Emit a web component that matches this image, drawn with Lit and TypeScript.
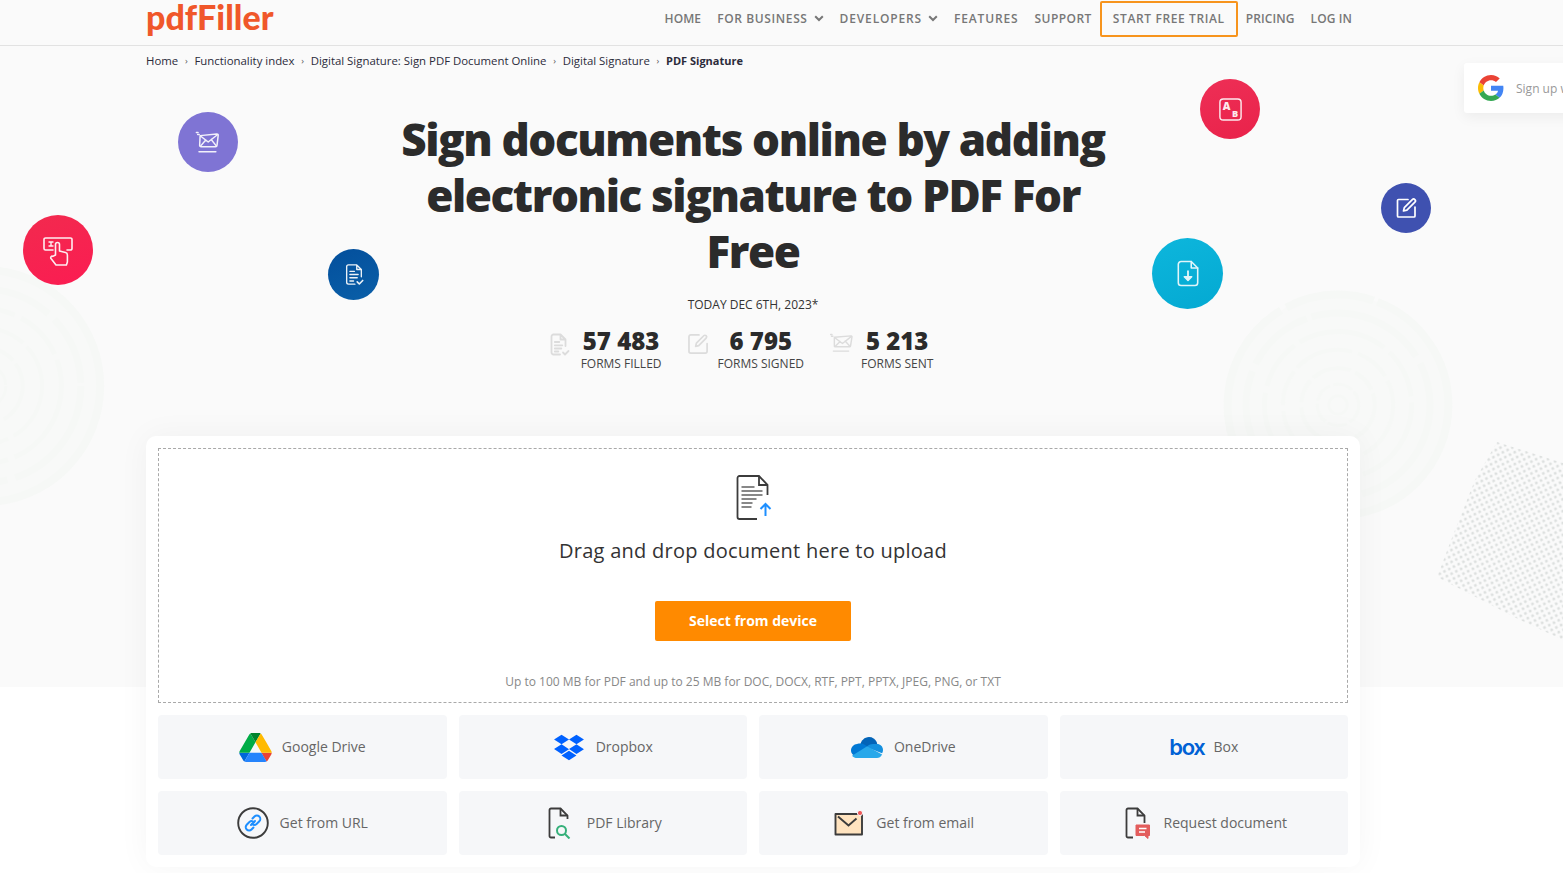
import { LitElement, html, css, svg } from "lit";
import { customElement } from "lit/decorators.js";

const chevron = html`<svg class="chev" viewBox="0 0 10 7" width="10" height="7"><path d="M1.200 1.200 5 5l3.800-3.800" fill="none" stroke="#777" stroke-width="2"/></svg>`;

const rings = (cx: number, cy: number, r: number) => svg`
  <g fill="none" stroke="#f6f8f6">
    <circle cx=${cx} cy=${cy} r=${r * 0.96} fill="#f8f9f8" stroke-width="8" stroke-dasharray="180 6 90 4"/>
    <circle cx=${cx} cy=${cy} r=${r * 0.8} stroke-width="7" stroke-dasharray="120 8 70 5"/>
    <circle cx=${cx} cy=${cy} r=${r * 0.64} stroke-width="5" stroke-dasharray="90 7 50 6"/>
    <circle cx=${cx} cy=${cy} r=${r * 0.48} stroke-width="4" stroke-dasharray="60 6 36 5"/>
    <circle cx=${cx} cy=${cy} r=${r * 0.32} stroke-width="4" stroke-dasharray="40 5 24 4"/>
    <circle cx=${cx} cy=${cy} r=${r * 0.18} stroke-width="3" stroke-dasharray="20 3"/>
    <circle cx=${cx} cy=${cy} r=${r * 0.08} stroke-width="3"/>
  </g>`;

const icons = {
  mail: html`<svg viewBox="0 0 32 32" width="30" height="30" fill="none" stroke="#fff" stroke-width="1.600" stroke-linejoin="round" stroke-linecap="round" opacity=".9"><path d="M7.600 9.200 25.400 7.400c.9 0 1.500.6 1.500 1.400l-1.300 10.800c-.1.800-.7 1.400-1.500 1.400H8.600c-1 0-1.600-.8-1.500-1.600z"/><path d="M8 9.600 16.200 16 26.400 8M8 20.400l5.600-6.600M25 20.400 19.400 13.400"/><path d="M5 8h1.600M3.600 5.800h1.800M6.400 26.300h18"/></svg>`,
  hand: html`<svg viewBox="0 0 34 34" width="34" height="34" fill="none" stroke="#fff" stroke-width="1.600" stroke-linejoin="round" stroke-linecap="round" opacity=".92"><path d="M12 17H4.500A1.500 1.500 0 0 1 3 15.500V6.500A1.500 1.500 0 0 1 4.500 5h25A1.500 1.500 0 0 1 31 6.500v9a1.500 1.500 0 0 1-1.500 1.500H26"/><path d="M8 9h4M8 13h4M10 9v4" stroke-width="1.400"/><path d="M14.500 22V11.500a2 2 0 0 1 4 0V18l6 1.500c1.200.3 1.900 1.200 1.900 2.400V29l-1 3H15l-5-6.500c-.8-1.100.4-2.900 1.800-2.100z"/></svg>`,
  doc: html`<svg viewBox="0 0 24 26" width="22" height="24" fill="none" stroke="#fff" stroke-width="1.500" stroke-linejoin="round" stroke-linecap="round" opacity=".92"><path d="M13 23H6a2 2 0 0 1-2-2V4a2 2 0 0 1 2-2h9l5 5v8M15 2v5h5"/><path d="M7.500 9h5M7.500 12.500h9M7.500 16h8M7.500 19.500h4"/><path d="m15.500 20.500 2.300 2.300 3.700-3.800" stroke-width="1.800"/></svg>`,
  ab: html`<svg viewBox="0 0 26 26" width="25" height="25" fill="none" stroke="#fff" stroke-width="1.500" opacity=".9"><rect x="2" y="2" width="22" height="22" rx="3.500"/><text x="5" y="13" font-family="Open Sans, sans-serif" font-size="11" font-weight="800" fill="#fff" stroke="none">A</text><text x="14.500" y="21" font-family="Open Sans, sans-serif" font-size="9.500" font-weight="800" fill="#fff" stroke="none">B</text></svg>`,
  edit: html`<svg viewBox="0 0 24 24" width="24" height="24" fill="none" stroke="#fff" stroke-width="1.700" stroke-linejoin="round" stroke-linecap="round"><path d="M14 3.500H4.500a1 1 0 0 0-1 1V20a1 1 0 0 0 1 1H20a1 1 0 0 0 1-1v-9"/><path d="m9.500 15 .8-3.400 8-8a1.700 1.700 0 0 1 2.600 2.600l-8 8z"/></svg>`,
  down: html`<svg viewBox="0 0 26 32" width="24" height="30" fill="none" stroke="#fff" stroke-width="1.700" stroke-linejoin="round" stroke-linecap="round" opacity=".88"><path d="M16.500 2.500H5.500a3 3 0 0 0-3 3v20a3 3 0 0 0 3 3h15a3 3 0 0 0 3-3v-16z"/><path d="M16.500 2.500v7h7"/><path d="M13 13v9" stroke-width="2"/><path d="m9 19 4 4 4-4z" fill="#fff"/></svg>`,
  statDoc: html`<svg viewBox="0 0 20 24" width="20" height="24" fill="none" stroke="#dcdcdc" stroke-width="1.800" stroke-linejoin="round" stroke-linecap="round"><path d="M10 21.500H3.500a2 2 0 0 1-2-2v-16a2 2 0 0 1 2-2h7l5 5V13M10.500 1.500v5h5"/><path d="M4.800 9h4.500M4.800 12.300h7.500M4.800 15.500h6.500M4.800 18.500h3.500"/><path d="m13 19.500 2 2 3.500-3.500"/></svg>`,
  statEdit: html`<svg viewBox="0 0 22 22" width="21" height="21" fill="none" stroke="#dcdcdc" stroke-width="1.800" stroke-linejoin="round" stroke-linecap="round"><path d="M11.500 2H3a2 2 0 0 0-2 2v15a2 2 0 0 0 2 2h15a2 2 0 0 0 2-2v-8"/><path d="m8 14 .8-3.300 7.700-7.800a1.600 1.600 0 0 1 2.500 2.400l-7.800 7.900z"/></svg>`,
  statMail: html`<svg viewBox="0 0 24 21" width="23" height="20" fill="none" stroke="#dcdcdc" stroke-width="1.500" stroke-linejoin="round" stroke-linecap="round"><path d="M4.500 4.500 22 3c.6 0 1 .5 1 1l-1.500 9.500c-.1.600-.5 1-1.200 1H5.500c-.7 0-1.100-.5-1-1.100z"/><path d="m5 5 8 6 9.500-7.500M5.500 14l5-5M20.800 14l-5-5.500"/><path d="M1.500 3.500H3M.5 1.500H2M3.500 19h16"/></svg>`,
  upload: html`<svg class="up" viewBox="0 0 38 46" width="38" height="46" fill="none"><path d="M31.500 20V9.800L23 1H3.500A2 2 0 0 0 1.500 3v39a2 2 0 0 0 2 2H21" stroke="#3c3c3c" stroke-width="1.800"/><path d="M23 1v9h8.500" stroke="#3c3c3c" stroke-width="1.800"/><path d="M5.500 12h13M5.500 16h21M5.500 20h21M5.500 24h15M5.500 28h11M5.500 32h10" stroke="#888" stroke-width="1.800"/><path d="M29.500 41V29M24.500 34l5-5 5 5" stroke="#1e8fff" stroke-width="2"/></svg>`,
  gdrive: html`<svg viewBox="0 0 87.300 78" width="33" height="29"><path d="m6.600 66.850 3.850 6.650c.8 1.400 1.950 2.500 3.300 3.300l13.750-23.800h-27.500c0 1.550.4 3.100 1.200 4.500z" fill="#0066da"/><path d="m43.650 25-13.750-23.800c-1.350.8-2.500 1.900-3.300 3.300l-25.400 44a9.060 9.060 0 0 0 -1.200 4.500h27.500z" fill="#00ac47"/><path d="m73.550 76.800c1.350-.8 2.500-1.900 3.300-3.300l1.600-2.750 7.650-13.250c.8-1.400 1.200-2.950 1.200-4.500h-27.502l5.852 11.500z" fill="#ea4335"/><path d="m43.650 25 13.750-23.800c-1.350-.8-2.900-1.200-4.500-1.200h-18.500c-1.600 0-3.150.45-4.500 1.200z" fill="#00832d"/><path d="m59.800 53h-32.300l-13.750 23.800c1.350.8 2.900 1.200 4.500 1.200h50.800c1.600 0 3.150-.45 4.500-1.200z" fill="#2684fc"/><path d="m73.400 26.500-12.700-22c-.8-1.400-1.950-2.500-3.300-3.300l-13.750 23.800 16.150 28h27.450c0-1.550-.4-3.100-1.200-4.500z" fill="#ffba00"/></svg>`,
  dropbox: html`<svg viewBox="0 0 528 512" width="30" height="29"><path fill="#0061ff" d="M264.400 116.300l-132 84.300 132 84.300-132 84.300L0 284.100l132.300-84.300L0 116.300 132.300 32l132.100 84.300zM131.600 395.700l132-84.300 132 84.300-132 84.300-132-84.300zm132.800-111.600l132-84.300-132-83.600L395.700 32 528 116.300l-132.300 84.300L528 284.800l-132.300 84.300-131.300-85z"/></svg>`,
  onedrive: html`<svg viewBox="0 0 32 21" width="32" height="21"><path fill="#0364b8" d="M9 8.500C10 3.500 13.500 0 18 0c3.500 0 6.300 2 7.700 5 .3.700.4 1.400.5 2.300L20 12z"/><path fill="#0078d4" d="M9.500 6.500c1.500 0 3 .4 4.200 1.200L20 12l-7 7H6C2.500 19 0 16.500 0 13.500 0 10 3 7 6 7c1.200-.4 2.300-.5 3.500-.5z"/><path fill="#1490df" d="M26 7c3.300 0 6 2.600 6 6 0 1.200-.3 2.200-.9 3.200L20 12l-3.800-2.800C18 7.800 20 7 22 7z"/><path fill="#28a8ea" d="M16.200 9.200 31.100 17.500C30 20 28 21 26 21H6c-1.800 0-3.700-.6-5-2.300z"/></svg>`,
  url: html`<svg viewBox="0 0 32 32" width="32" height="32" fill="none"><circle cx="16" cy="16" r="14.800" stroke="#3c3c3c" stroke-width="1.900"/><g stroke="#1e8fff" stroke-width="2" stroke-linecap="round"><path d="m14 18 4-4"/><path d="m15.500 11.500 2-2a3.300 3.300 0 0 1 4.800 4.800l-2.700 2.700a3.300 3.300 0 0 1-4.500-.2"/><path d="m16.500 20.500-2 2a3.300 3.300 0 0 1-4.800-4.800l2.700-2.700a3.300 3.300 0 0 1 4.500.2"/></g></svg>`,
  lib: html`<svg viewBox="0 0 24 32" width="24" height="32" fill="none"><path d="M7 30.500H3A1.500 1.500 0 0 1 1.500 29V3A1.500 1.500 0 0 1 3 1.500h9.500l7 7V12" stroke="#3c3c3c" stroke-width="1.800"/><path d="M12.500 1.500v7h7" stroke="#3c3c3c" stroke-width="1.800"/><circle cx="13.500" cy="23.500" r="4.500" stroke="#35b07a" stroke-width="2"/><path d="m17 27 4.500 4.500" stroke="#35b07a" stroke-width="2"/></svg>`,
  email: html`<svg viewBox="0 0 30 26" width="30" height="26" fill="none"><path d="M1.500 4h20v0h6.500v20.500H1.500z" fill="#ffe3bf" stroke="#3c3c3c" stroke-width="1.900" stroke-linejoin="round"/><path d="m4 6.500 10.500 9 8-7" stroke="#3c3c3c" stroke-width="1.900"/><circle cx="26" cy="3" r="2.600" fill="#ee5a5a" stroke="#f6f7f9"/></svg>`,
  req: html`<svg viewBox="0 0 26 32" width="26" height="32" fill="none"><path d="M8 30.500H3A1.500 1.500 0 0 1 1.500 29V3A1.500 1.500 0 0 1 3 1.500h9.500l7 7V16" stroke="#3c3c3c" stroke-width="1.800"/><path d="M12.500 1.500v7h7" stroke="#3c3c3c" stroke-width="1.800"/><path d="M11 18h13.500v10.500h-1.500v3l-3.500-3H11z" fill="#e35d5d" stroke="#e35d5d" stroke-linejoin="round"/><path d="M14 21.500h7.500M14 25h6" stroke="#fff" stroke-width="1.500"/></svg>`,
  g: html`<svg viewBox="0 0 48 48" width="26" height="26"><path fill="#EA4335" d="M24 9.500c3.540 0 6.710 1.220 9.210 3.600l6.850-6.850C35.900 2.380 30.470 0 24 0 14.620 0 6.510 5.380 2.560 13.220l7.980 6.190C12.430 13.720 17.740 9.500 24 9.500z"/><path fill="#4285F4" d="M46.980 24.550c0-1.570-.15-3.090-.38-4.550H24v9.020h12.940c-.58 2.960-2.260 5.480-4.780 7.180l7.730 6c4.510-4.180 7.090-10.360 7.090-17.650z"/><path fill="#FBBC05" d="M10.530 28.590c-.48-1.450-.76-2.990-.76-4.590s.27-3.140.76-4.590l-7.980-6.190C.92 16.460 0 20.120 0 24c0 3.880.92 7.540 2.560 10.780l7.970-6.190z"/><path fill="#34A853" d="M24 48c6.480 0 11.930-2.130 15.890-5.810l-7.730-6c-2.150 1.450-4.920 2.300-8.160 2.300-6.260 0-11.570-4.220-13.470-9.910l-7.980 6.190C6.510 42.620 14.620 48 24 48z"/></svg>`,
};

const tiles = [
  [icons.gdrive, "Google Drive", 10, 0],
  [icons.dropbox, "Dropbox", 12, 1],
  [icons.onedrive, "OneDrive", 11, 0],
  [html`<span class="boxlogo">box</span>`, "Box", 9, 0],
  [icons.url, "Get from URL", 11, 0],
  [icons.lib, "PDF Library", 15, 4],
  [icons.email, "Get from email", 12, 2],
  [icons.req, "Request document", 13, 4],
] as const;

const floats = [
  { cls: "c-purple", x: 178, y: 112, s: 60, icon: icons.mail },
  { cls: "c-red", x: 23, y: 215, s: 70, icon: icons.hand },
  { cls: "c-navy", x: 328, y: 249, s: 51, icon: icons.doc },
  { cls: "c-red2", x: 1200, y: 79, s: 60, icon: icons.ab },
  { cls: "c-indigo", x: 1381, y: 183, s: 50, icon: icons.edit },
  { cls: "c-cyan", x: 1152, y: 238, s: 71, icon: icons.down },
];

@customElement("app-root")
export class AppRoot extends LitElement {
  static styles = css`
    :host {
      display: block;
      position: relative;
      height: 873px;
      overflow: hidden;
      background: linear-gradient(#fafafa 687px, #fff 687px);
      font-family: "Open Sans", sans-serif;
      color: #333;
    }
    .deco { position: absolute; inset: 0; pointer-events: none; }
    .deco-svg { position: absolute; left: 0; top: 0; }
    .float {
      position: absolute; border-radius: 50%;
      display: flex; align-items: center; justify-content: center;
    }
    .c-purple { background: #7f74d4; }
    .c-red { background: linear-gradient(160deg, #f22a4e, #fb1c52); }
    .c-navy { background: linear-gradient(160deg, #034f9c, #0a5fa8); }
    .c-red2 { background: linear-gradient(160deg, #ee2f56, #e9224a); }
    .c-indigo { background: #3f51b0; }
    .c-cyan { background: linear-gradient(160deg, #0db6dc, #04a9d2); }
    .content { position: relative; }
    header {
      height: 45px; box-sizing: content-box;
      border-bottom: 1px solid #e2e2e2;
      padding: 0 211px 0 146px;
      display: flex; align-items: flex-start; justify-content: space-between;
    }
    .logo {
      font-family: Lato, sans-serif; font-weight: 900; font-size: 34px;
      line-height: 34px; letter-spacing: 0; color: #f0572a;
    }
    nav { display: flex; align-items: center; height: 37px;
      font-size: 12px; font-weight: 600; color: #777; }
    nav a { margin-left: 16px; display: flex; align-items: center; gap: 6px; white-space: nowrap; }
    nav a:first-child { margin-left: 0; }
    nav a.tight { letter-spacing: .1px; }
    nav a.mid { letter-spacing: .45px; }
    nav a.wide { letter-spacing: .62px; }
    nav a.wider { letter-spacing: .85px; }
    nav a.trial {
      height: 36px; box-sizing: border-box; padding: 0 11px; margin-left: 8px; margin-right: -8px;
      border: 2px solid #f7941d; border-radius: 2px; color: #777;
    }
    .chev { display: block; }
    .crumbs {
      display: flex; align-items: center; gap: 6.750px;
      padding: 6px 0 0 146px; height: 17px; font-size: 11.400px; line-height: 17px; color: #2b2b3a;
    }
    .crumbs i { font-style: normal; font-size: 9px; color: #555; }
    .crumbs b { font-weight: 700; font-size: 11px; }
    .hero { width: 1214px; margin: 0 0 0 146px; text-align: center; }
    h1 {
      margin: 42px auto 0; width: 730px;
      font-size: 44px; line-height: 56px; font-weight: 800; letter-spacing: -1.400px; color: #2b2b2b;
    }
    .today { margin-top: 17px; font-size: 12px; line-height: 18px; color: #333; }
    .stats { display: flex; justify-content: center; gap: 26px; margin: 12px 23px 0 0; }
    .stat { display: flex; align-items: flex-start; gap: 11px; }
    .stat.s2 { gap: 9px; }
    .stat.s3 { gap: 8px; }
    .stat svg { margin-top: 7px; display: block; }
    .stat .num { font-size: 24px; font-weight: 800; line-height: 30px; color: #2b2b2b; }
    .stat .lbl { font-size: 12px; line-height: 16px; color: #444; }
    .card {
      margin: 64px 0 0 146px; width: 1214px; height: 431px; box-sizing: border-box;
      background: #fff; border-radius: 10px; padding: 12px;
      box-shadow: 0 0 32px rgba(0,0,0,.045);
    }
    .drop {
      height: 255px; box-sizing: border-box; border: 1px dashed #a9a9a9;
      display: flex; flex-direction: column; align-items: center; padding-top: 26px;
    }
    .drop svg { display: block; }
    .drop .up { margin-left: 4px; }
    .drop h2 { margin: 15px 0 0; font-size: 20px; line-height: 30px; font-weight: 400; color: #333; letter-spacing: .26px; }
    .btn {
      margin-top: 35px; width: 196px; height: 40px; box-sizing: border-box; padding-bottom: 2px;
      border-radius: 2px; background: #ff8a00; color: #fff;
      font-size: 14px; font-weight: 700; display: flex; align-items: center; justify-content: center;
    }
    .note { margin-top: 32px; font-size: 12px; line-height: 18px; color: #888; }
    .tiles { display: grid; grid-template-columns: repeat(4, 1fr); gap: 12px; margin-top: 12px; }
    .tile {
      height: 64px; background: #f6f7f9; border-radius: 4px;
      display: flex; align-items: center; justify-content: center;
      font-size: 14px; color: #666;
    }
    .tile span { margin-bottom: 2px; }
    .tile svg { display: block; }
    .tile .boxlogo {
      margin-bottom: 0;
      font-family: Inter, sans-serif; font-weight: 600; font-size: 22px; line-height: 20px; letter-spacing: -1.300px; color: #0061d5;
    }
    .gsign {
      position: absolute; left: 1464px; top: 63px; width: 300px; height: 50px;
      background: #fff; border-radius: 3px; box-shadow: 0 4px 14px rgba(0,0,0,.06);
      display: flex; align-items: center; gap: 12px; padding-left: 14px; box-sizing: border-box;
      font-size: 12px; color: #999; white-space: nowrap;
    }
  `;

  render() {
    return html`
      <div class="deco">
        <svg class="deco-svg" width="1563" height="873">
          ${rings(-16, 386, 121)}
          ${rings(1338, 405, 115)}
          <defs>
            <pattern id="dots" width="7.500" height="7.500" patternUnits="userSpaceOnUse" patternTransform="rotate(18 1500 540)">
              <circle cx="1.900" cy="1.900" r="1.500" fill="#dde0df"/>
              <circle cx="5.650" cy="5.650" r="1.500" fill="#dde0df"/>
            </pattern>
          </defs>
          <polygon points="1497,442 1563,463 1563,640 1520,620 1437,577 1455,530 1475,480" fill="url(#dots)"/>
        </svg>
        ${floats.map(
          (f) => html`<div class="float ${f.cls}" style="left:${f.x}px;top:${f.y}px;width:${f.s}px;height:${f.s}px">${f.icon}</div>`
        )}
      </div>
      <div class="content">
        <header>
          <div class="logo">pdfFiller</div>
          <nav>
            <a class="tight">HOME</a>
            <a class="wide">FOR BUSINESS ${chevron}</a>
            <a class="wider">DEVELOPERS ${chevron}</a>
            <a class="wider">FEATURES</a>
            <a class="mid">SUPPORT</a>
            <a class="trial wide">START FREE TRIAL</a>
            <a class="tight">PRICING</a>
            <a class="tight">LOG IN</a>
          </nav>
        </header>
        <div class="crumbs">
          <span>Home</span><i>›</i><span>Functionality index</span><i>›</i>
          <span>Digital Signature: Sign PDF Document Online</span><i>›</i>
          <span>Digital Signature</span><i>›</i><b>PDF Signature</b>
        </div>
        <section class="hero">
          <h1>Sign documents online by adding electronic signature to PDF For Free</h1>
          <div class="today">TODAY DEC 6TH, 2023*</div>
          <div class="stats">
            <div class="stat">${icons.statDoc}<div><div class="num">57 483</div><div class="lbl">FORMS FILLED</div></div></div>
            <div class="stat s2">${icons.statEdit}<div><div class="num">6 795</div><div class="lbl">FORMS SIGNED</div></div></div>
            <div class="stat s3">${icons.statMail}<div><div class="num">5 213</div><div class="lbl">FORMS SENT</div></div></div>
          </div>
        </section>
        <section class="card">
          <div class="drop">
            ${icons.upload}
            <h2>Drag and drop document here to upload</h2>
            <div class="btn">Select from device</div>
            <div class="note">Up to 100 MB for PDF and up to 25 MB for DOC, DOCX, RTF, PPT, PPTX, JPEG, PNG, or TXT</div>
          </div>
          <div class="tiles">
            ${tiles.map(
              ([ic, label, gap, pad]) => html`<div class="tile" style="gap:${gap}px;padding-left:${pad}px">${ic}<span>${label}</span></div>`
            )}
          </div>
        </section>
      </div>
      <div class="gsign">${icons.g}<span>Sign up with Google</span></div>
    `;
  }
}
